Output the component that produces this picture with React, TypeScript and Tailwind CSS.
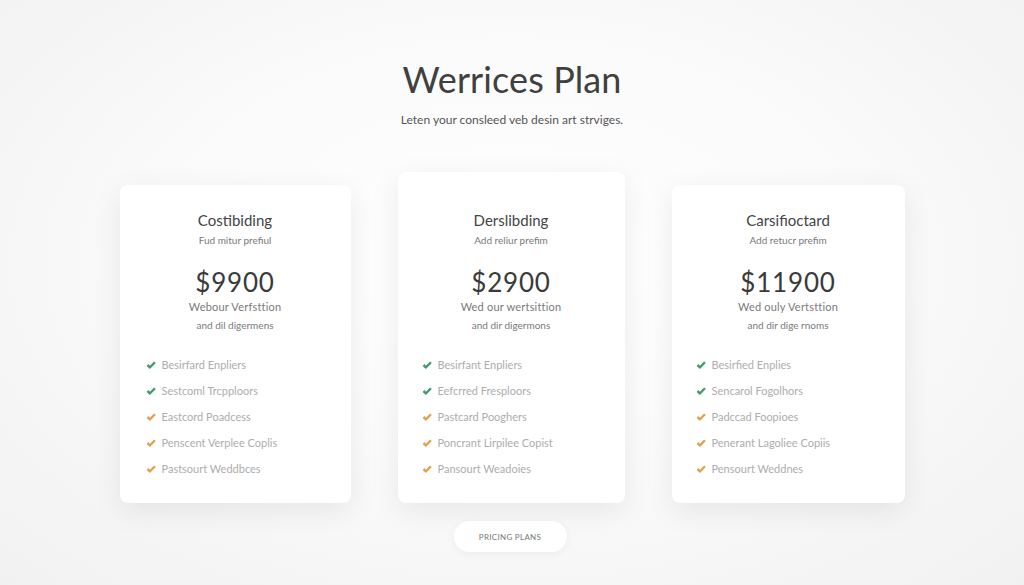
import React from 'react';

type Plan = {
  name: string;
  tagline: string;
  price: string;
  line1: string;
  line2: string;
  features: string[];
  tall?: boolean;
  width: string;
  padLeft: string;
};

const plans: Plan[] = [
  {
    name: 'Costibiding',
    tagline: 'Fud mitur prefiul',
    price: '$9900',
    line1: 'Webour Verfsttion',
    line2: 'and dil digermens',
    features: ['Besirfard Enpliers', 'Sestcoml Trcpploors', 'Eastcord Poadcess', 'Penscent Verplee Coplis', 'Pastsourt Weddbces'],
    width: 'w-[231px]',
    padLeft: 'pl-[26px]',
  },
  {
    name: 'Derslibding',
    tagline: 'Add reliur prefim',
    price: '$2900',
    line1: 'Wed our wertsittion',
    line2: 'and dir digermons',
    features: ['Besirfant Enpliers', 'Eefcrred Fresploors', 'Pastcard Pooghers', 'Poncrant Lirpilee Copist', 'Pansourt Weadoies'],
    tall: true,
    width: 'w-[227px]',
    padLeft: 'pl-[24px]',
  },
  {
    name: 'Carsifioctard',
    tagline: 'Add retucr prefim',
    price: '$11900',
    line1: 'Wed ouly Vertsttion',
    line2: 'and dir dige rnoms',
    features: ['Besirfied Enplies', 'Sencarol Fogolhors', 'Padccad Foopioes', 'Penerant Lagoliee Copiis', 'Pensourt Weddnes'],
    width: 'w-[233px]',
    padLeft: 'pl-[24px]',
  },
];

function Check({ color }: { color: string }) {
  return (
    <svg width="10" height="9" viewBox="0 0 10 9" className="shrink-0">
      <path d="M0.6 4.9 L2.4 3.1 L3.9 4.7 L8.1 0.4 L9.8 2.1 L3.9 8.1 Z" fill={color} />
    </svg>
  );
}

function PlanCard({ plan }: { plan: Plan }) {
  return (
    <div
      className={`${plan.width} ${plan.tall ? 'pt-[38px]' : 'pt-[25px]'} pb-[21px] bg-white rounded-lg shadow-[0_8px_30px_rgba(0,0,0,0.08)] flex flex-col`}
    >
      <div className="text-center text-[15px] leading-[20px] text-[#444]">{plan.name}</div>
      <div className="text-center text-[10px] leading-[14px] mt-[3px] text-[#7a7a7a]">{plan.tagline}</div>
      <div className="text-center text-[26px] leading-[32px] mt-[19px] text-[#3a3a3a] tracking-[0.8px]">{plan.price}</div>
      <div className="text-center text-[11px] leading-[18px] text-[#7a7a7a] tracking-[0.2px]">{plan.line1}</div>
      <div className="text-center text-[10px] leading-[18px] text-[#7a7a7a]">{plan.line2}</div>
      <ul className={`mt-[18px] ${plan.padLeft} flex flex-col`}>
        {plan.features.map((f, i) => (
          <li key={f} className="h-[26px] flex items-center gap-[6px] text-[11px] text-[#adadad]">
            <Check color={i < 2 ? '#3f9a6e' : '#e2a04e'} />
            <span>{f}</span>
          </li>
        ))}
      </ul>
    </div>
  );
}

export default function App() {
  return (
    <div
      className="w-[1024px] h-[585px] overflow-hidden bg-[radial-gradient(ellipse_at_50%_45%,#ffffff_0%,#fbfbfb_45%,#f1f1f1_100%)] flex flex-col items-center"
      style={{ fontFamily: 'Lato, "Open Sans", sans-serif' }}
    >
      <h1 className="mt-[58px] text-[36px] leading-[42px] text-[#404040] tracking-[0.1px]">Werrices Plan</h1>
      <p className="mt-[12px] text-[12px] leading-[16px] text-[#555]">Leten your consleed veb desin art strviges.</p>
      <div className="mt-[44px] flex items-end gap-[47px]">
        {plans.map((p) => (
          <PlanCard key={p.name} plan={p} />
        ))}
      </div>
      <button className="mt-[18px] w-[113px] h-[31px] rounded-full bg-white shadow-[0_2px_10px_rgba(0,0,0,0.05)] text-[8px] tracking-[0.3px] text-[#777] ml-[-4px]">
        PRICING PLANS
      </button>
    </div>
  );
}
